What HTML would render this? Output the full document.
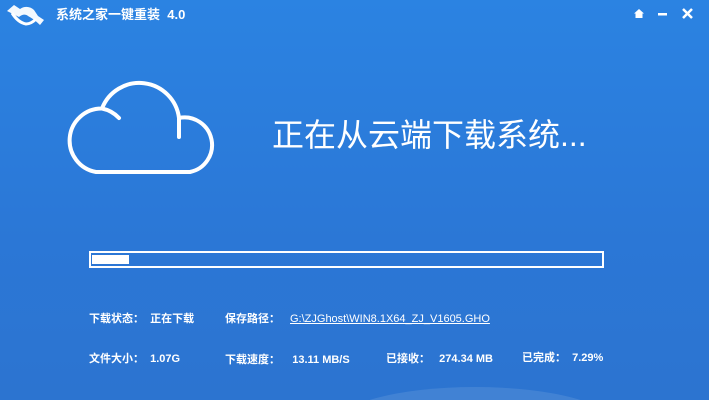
<!DOCTYPE html>
<html><head><meta charset="utf-8"><style>
*{margin:0;padding:0}
html,body{width:709px;height:400px;overflow:hidden}
body{position:relative;background:linear-gradient(#2b83e2,#2b77d6 60%,#2c74d0);font-family:"Liberation Sans","Noto Sans CJK SC",sans-serif;color:#fff}
.a{position:absolute;white-space:nowrap;line-height:1.2}
.s{font-size:11px;font-weight:bold}
</style></head><body>
<svg class="a" style="left:0;top:0" width="709" height="400">
<g fill="#fff">
<path d="M7,11 L14,5 L20,9 C24,6 30,6 34,10 L38,16 L44,20 L40,25 C36,21 32,18 28,16 C26,14 22,14 19,17 Z" opacity="0.95"/>
<path d="M12,13 C16,19 20,23 26,24 C30,24 33,22 36,19" fill="none" stroke="#fff" stroke-width="3"/>
</g>
<g fill="#fff">
<path d="M639,9 L644,13.5 H642.5 V18 H635.5 V13.5 H634 Z"/>
<rect x="658" y="13" width="9" height="2.5"/>
</g>
<path d="M683,9 L692,18 M692,9 L683,18" stroke="#fff" stroke-width="2.5"/>
<ellipse cx="475" cy="425" rx="140" ry="38" fill="#fff" opacity="0.1"/>
<g fill="none" stroke="#fff" stroke-width="4" stroke-linecap="round">
<path d="M96,172 A32,32 0 0 1 102,108.5 A40,40 0 0 1 179,118 A27.5,27.5 0 0 1 190,172 Z"/>
<path d="M102,108.5 A32,32 0 0 1 119,118"/>
<path d="M179,118 V137"/>
</g>
<rect x="90" y="252" width="513" height="15" fill="none" stroke="#fff" stroke-width="2"/>
<rect x="92" y="255" width="37" height="9" fill="#fff"/>
</svg>
<div class="a" style="left:56px;top:7px;font-size:13px;font-weight:bold">系统之家一键重装&nbsp; 4.0</div>
<div class="a" style="left:272px;top:116px;font-size:32px">正在从云端下载系统...</div>
<div class="a s" style="left:89px;top:313px">下载状态：&nbsp; 正在下载</div>
<div class="a s" style="left:225px;top:313px">保存路径：</div>
<div class="a" style="left:290px;top:313px;font-size:11px;text-decoration:underline">G:\ZJGhost\WIN8.1X64_ZJ_V1605.GHO</div>
<div class="a s" style="left:89px;top:353px">文件大小：&nbsp; 1.07G</div>
<div class="a s" style="left:225px;top:354px">下载速度：&nbsp;&nbsp;&nbsp; 13.11 MB/S</div>
<div class="a s" style="left:386px;top:353px">已接收：&nbsp;&nbsp; 274.34 MB</div>
<div class="a s" style="left:522px;top:352px">已完成：&nbsp; 7.29%</div>
</body></html>
